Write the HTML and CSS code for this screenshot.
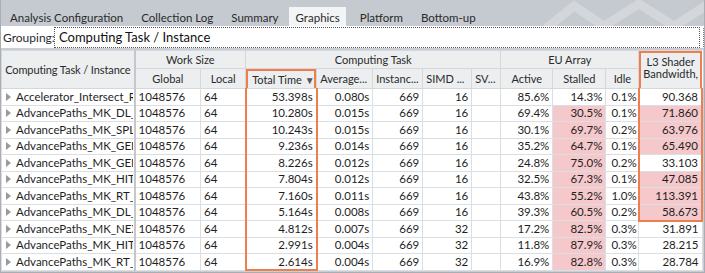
FILE: index.html
```html
<!DOCTYPE html>
<html>
<head>
<meta charset="utf-8">
<link rel="stylesheet" href="styles.css">
</head>
<body>
<div class="app">
  <div class="tabbar">
    <svg class="deco" width="160" height="26" viewBox="0 0 160 26"><polyline points="0,30 30,6 60,26 95,4 130,26 165,4" fill="none" stroke="#d3d7dc" stroke-width="9"/></svg>
    <div class="tab">Analysis Configuration</div>
    <div class="tab">Collection Log</div>
    <div class="tab">Summary</div>
    <div class="tab active">Graphics</div>
    <div class="tab">Platform</div>
    <div class="tab">Bottom-up</div>
  </div>
  <div class="grouping">
    <span class="glabel">Grouping:</span>
    <div class="gbox">Computing Task / Instance</div>
    <span class="gend"></span>
  </div>
  <table class="grid">
    <colgroup>
      <col style="width:133px"><col style="width:66px"><col style="width:45px"><col style="width:71px"><col style="width:56px"><col style="width:50px"><col style="width:49px"><col style="width:29px"><col style="width:52px"><col style="width:53px"><col style="width:33px"><col style="width:63px">
    </colgroup>
    <thead>
      <tr class="h1">
        <th rowspan="2" class="first">Computing Task / Instance</th>
        <th colspan="2">Work Size</th>
        <th colspan="5">Computing Task</th>
        <th colspan="3">EU Array</th>
        <th rowspan="2" class="l3h"><div class="l3box">L3 Shader<br>Bandwidth,</div></th>
      </tr>
      <tr class="h2">
        <th>Global</th><th>Local</th><th class="tt"><div class="ttbox">Total Time <span class="arrow">▼</span></div></th><th>Average...</th><th>Instanc...</th><th>SIMD ...</th><th>SV...</th><th class="c">Active</th><th class="c">Stalled</th><th class="c">Idle</th>
      </tr>
    </thead>
    <tbody id="rows"></tbody>
  </table>
</div>
<script src="app.js"></script>
</body>
</html>
```
FILE: app.js
```js
const data = [
  ["Accelerator_Intersect_R","53.398s","0.080s","16","85.6%","14.3%",false,"0.1%","90.368",false],
  ["AdvancePaths_MK_DL_","10.280s","0.015s","16","69.4%","30.5%",true,"0.1%","71.860",true],
  ["AdvancePaths_MK_SPLA","10.243s","0.015s","16","30.1%","69.7%",true,"0.2%","63.976",true],
  ["AdvancePaths_MK_GEN","9.236s","0.014s","16","35.2%","64.7%",true,"0.1%","65.490",true],
  ["AdvancePaths_MK_GEN","8.226s","0.012s","16","24.8%","75.0%",true,"0.2%","33.103",false],
  ["AdvancePaths_MK_HIT_","7.804s","0.012s","16","32.5%","67.3%",true,"0.1%","47.085",true],
  ["AdvancePaths_MK_RT_I","7.160s","0.011s","16","43.8%","55.2%",true,"1.0%","113.391",true],
  ["AdvancePaths_MK_DL_:","5.164s","0.008s","16","39.3%","60.5%",true,"0.2%","58.673",true],
  ["AdvancePaths_MK_NEX","4.812s","0.007s","32","17.2%","82.5%",true,"0.3%","31.891",false],
  ["AdvancePaths_MK_HIT_","2.991s","0.004s","32","11.8%","87.9%",true,"0.3%","28.215",false],
  ["AdvancePaths_MK_RT_I","2.614s","0.004s","32","16.9%","82.8%",true,"0.3%","28.784",false]
];
const tb = document.getElementById("rows");
data.forEach((d, i) => {
  const tr = document.createElement("tr");
  const last = i === data.length - 1;
  tr.innerHTML =
    '<td class="name"><div class="nm"><span class="exp"></span>' + d[0] + '</div></td>' +
    '<td>1048576</td><td>64</td>' +
    '<td class="r tt' + (last ? ' ttlast' : '') + '">' + d[1] + '</td>' +
    '<td class="r">' + d[2] + '</td><td class="r">669</td>' +
    '<td class="r">' + d[3] + '</td><td></td>' +
    '<td class="r">' + d[4] + '</td>' +
    '<td class="r' + (d[6] ? ' pink' : '') + '">' + d[5] + '</td>' +
    '<td class="idle">' + d[7] + '</td>' +
    '<td class="r' + (d[9] ? ' pink' : '') + (i <= 7 ? ' l3' : '') + (i === 7 ? ' l3last' : '') + '">' + d[8] + '</td>';
  tb.appendChild(tr);
});
```
FILE: styles.css
```css
* { box-sizing: border-box; }
html, body { margin: 0; padding: 0; }
body {
  font-family: Lato, "Open Sans", sans-serif;
  font-size: 11.5px;
  color: #1e1e1e;
  background: #c9ced4;
  width: 705px;
  height: 273px;
  overflow: hidden;
}
.app {
  width: 705px;
  height: 273px;
  display: flex;
  flex-direction: column;
  border: 1px solid #a9aeb4;
  border-top: none;
}
.tabbar {
  position: relative;
  height: 26px;
  background: #c5cad0;
  display: flex;
  align-items: flex-end;
  padding-left: 1px;
  gap: 2px;
}
.deco { position: absolute; right: 0; top: 0; }
.tab {
  position: relative;
  height: 19px;
  padding: 3px 8px 0 8px;
  color: #2a2a2a;
  line-height: 15px;
}
.tab.active {
  background: #f3f4f5;
  padding: 3px 6px 0 7px;
  margin: 0 4px 0 0;
}
.grouping {
  height: 22px;
  background: #fff;
  display: flex;
  align-items: center;
  padding-left: 2px;
}
.glabel { width: 51px; color: #2a2a2a; font-size: 12px; }
.gbox {
  width: 646px;
  height: 21px;
  border: 1px dotted #555;
  padding: 1px 4px;
  line-height: 17px;
  font-size: 13px;
  color: #111;
}
.gend {
  margin-left: 3px;
  height: 19px;
  border-left: 1px dotted #777;
}
.grid {
  margin-top: 2px;
  border-collapse: collapse;
  table-layout: fixed;
  width: 702px;
  background: #fff;
}
th {
  background: #eceeef;
  font-weight: normal;
  font-size: 11px;
  color: #2a2a2a;
  border: 1px solid #d5d8db;
  padding: 0 3px;
  white-space: nowrap;
  overflow: hidden;
  text-align: left;
}
.h1 th { height: 18px; text-align: center; }
.h1 th.first { border-right: 2px solid #c5c8cb; padding: 0 1px; letter-spacing: -0.1px; }
.h2 th { height: 19px; }
.h2 th:nth-child(1), .h2 th:nth-child(2) { text-align: center; }
.h2 th.c { text-align: center; }
th.l3h {
  vertical-align: top;
  padding: 0;
  border-right: none;
}
.l3box {
  height: 37px;
  border: 2px solid #f07d4e;
  border-bottom: none;
  text-align: center;
  line-height: 12px;
  padding-top: 3px;
}
th.tt { padding: 0; }
.ttbox {
  height: 19px;
  border: 2px solid #f07d4e;
  border-bottom: none;
  padding: 1px 2px 0 4px;
  line-height: 15px;
}
.arrow { font-size: 10px; color: #555; }
td {
  height: 16.5px;
  padding: 0 3px;
  border: 1px solid #dcdfe2;
  white-space: nowrap;
  overflow: hidden;
  line-height: 14px;
  color: #1e1e1e;
}
td.name {
  padding: 0 0 0 1px;
  border-right: 2px solid #c5c8cb;
}
.nm {
  width: 130px;
  overflow: hidden;
  white-space: nowrap;
}
.exp {
  display: inline-block;
  width: 0; height: 0;
  border-left: 5px solid #9a9a9a;
  border-top: 4px solid transparent;
  border-bottom: 4px solid transparent;
  margin: 0 5px 0 3px;
  vertical-align: 0px;
}
td.r { text-align: right; }
td.idle { padding-left: 5px; }
td.pink { background: #f5c8cc; }
td.tt {
  border-left: 2px solid #f07d4e;
  border-right: 2px solid #f07d4e;
}
td.ttlast { border-bottom: 2px solid #f07d4e; }
td.l3 {
  border-left: 2px solid #f07d4e;
  border-right: 2px solid #f07d4e;
}
td.l3last { border-bottom: 2px solid #f07d4e; }
```
